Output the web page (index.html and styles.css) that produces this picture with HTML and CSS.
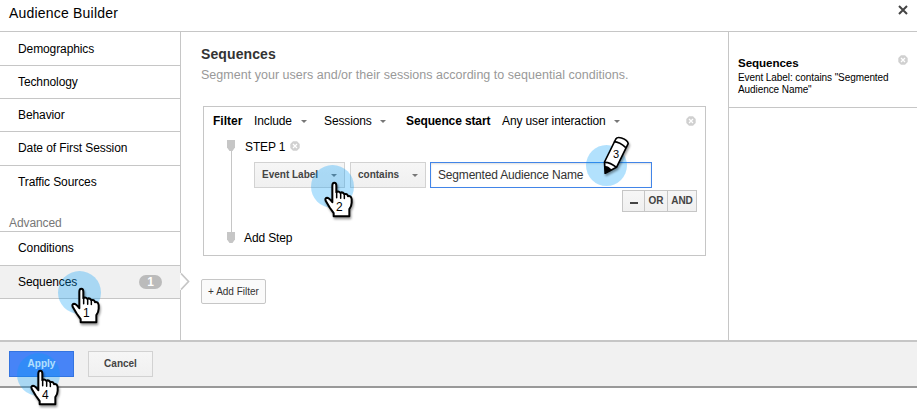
FILE: index.html
```html
<!DOCTYPE html>
<html lang="en">
<head>
<meta charset="utf-8">
<title>Audience Builder</title>
<link rel="stylesheet" href="styles.css">
</head>
<body>
<svg class="defs" width="0" height="0">
  <symbol id="remove" viewBox="0 0 10 10"><path d="M3 .3h4L9.700 3v4L7 9.700H3L.3 7V3z" fill="#d0d0d0"/><path d="M3 3l4 4M7 3L3 7" stroke="#fff" stroke-width="1.300"/></symbol>
  <symbol id="pin" viewBox="0 0 8 11"><path d="M0 0h8v7.500L5.500 11h-3L0 7.500z" fill="#c6c6c6"/></symbol>
  <symbol id="hand" viewBox="0 0 96 116">
    <path d="M28 64V17Q28 8 34 8Q40 8 40 17V36Q46 31 52 38Q58 34 64 42Q72 39 75 48Q84 46 86 57V68Q86 77 79 87V108H32V99L20 82L8 62Q5 54 12 53Q18 53 28 66Z" fill="#fff" stroke="#000" stroke-width="6" stroke-linejoin="round"/>
    <path d="M41 34V53M53 38V54M64 42V55" stroke="#000" stroke-width="4.500" stroke-linecap="round"/>
  </symbol>
</svg>
<div class="dialog">
  <header class="header"><h1>Audience Builder</h1>
    <svg class="close" viewBox="0 0 10 10"><path d="M1 1l8 8M9 1L1 9" stroke="#444" stroke-width="2"/></svg>
  </header>
  <div class="body">
    <nav class="sidebar">
      <a class="item"><span>Demographics</span></a>
      <a class="item"><span>Technology</span></a>
      <a class="item"><span>Behavior</span></a>
      <a class="item tall"><span>Date of First Session</span></a>
      <a class="item last"><span>Traffic Sources</span></a>
      <div class="group"><span>Advanced</span></div>
      <a class="item tall"><span>Conditions</span></a>
      <a class="item active"><span>Sequences</span><b class="count">1</b>
        <svg class="notch" viewBox="0 0 10 17"><path d="M0 0H1L9 8.500L1 17H0z" fill="#fff"/><path d="M1 .5L8.500 8.500L1 16.500" fill="none" stroke="#c6c6c6" stroke-width="1.700"/></svg>
      </a>
    </nav>
    <main class="main">
      <h2>Sequences</h2>
      <p class="intro">Segment your users and/or their sessions according to sequential conditions.</p>
      <section class="filter">
        <div class="filter-head">
          <b class="w-filter">Filter</b><span class="w-include">Include</span><i class="arrow"></i>
          <span class="w-sessions">Sessions</span><i class="arrow"></i>
          <b class="w-start">Sequence start</b><span class="w-any">Any user interaction</span><i class="arrow"></i>
          <svg class="remove"><use href="#remove"/></svg>
        </div>
        <div class="steps">
          <div class="rail"><svg><use href="#pin"/></svg><i></i><svg><use href="#pin"/></svg></div>
          <div class="step">
            <div class="step-title"><span>STEP 1</span><svg class="remove"><use href="#remove"/></svg></div>
            <div class="fields">
              <button class="select event"><span>Event Label</span><i class="arrow"></i></button>
              <button class="select contains"><span>contains</span><i class="arrow"></i></button>
              <div class="input"><span>Segmented Audience Name</span></div>
            </div>
            <div class="logic"><button class="minus"><i></i></button><button>OR</button><button>AND</button></div>
            <div class="add-step"><span>Add Step</span></div>
          </div>
        </div>
      </section>
      <button class="add-filter"><span>+ Add Filter</span></button>
    </main>
    <aside class="summary">
      <div class="card">
        <div class="card-head"><b>Sequences</b><svg class="remove"><use href="#remove"/></svg></div>
        <p>Event Label: contains "Segmented<br>Audience Name"</p>
      </div>
    </aside>
  </div>
  <footer class="footer"><button class="apply"><span>Apply</span></button><button class="cancel"><span>Cancel</span></button></footer>
</div>
<div class="marker m1"><svg><use href="#hand"/></svg><span>1</span></div>
<div class="marker m2"><svg><use href="#hand"/></svg><span>2</span></div>
<div class="marker m3"><svg class="pencil" viewBox="0 0 80 114"><path d="M4 78L38 9Q42 2 55 6Q74 12 75 23L40 94L6 112Z" fill="#fff" stroke="#000" stroke-width="5" stroke-linejoin="round"/><path d="M32 17Q50 18 68 35M4 79Q20 78 40 94" fill="none" stroke="#000" stroke-width="5"/><path d="M5 90Q17 89 25 102L6 112Z"/></svg><span>3</span></div>
<div class="marker m4"><svg><use href="#hand"/></svg><span>4</span></div>
</body>
</html>
```
FILE: styles.css
```css
* { box-sizing: border-box; }
body { margin: 0; width: 917px; height: 417px; overflow: hidden; background: #fff; color: #000; font: 12px/16px "Liberation Sans", Arial, sans-serif; }
h1, h2, p { margin: 0; font-weight: normal; }
button { font: bold 10px/14px "Liberation Sans", Arial, sans-serif; color: #444; padding: 0; margin: 0; border: 1px solid #d2d2d2; background: linear-gradient(#f6f6f6, #f0f0f0); display: flex; align-items: center; justify-content: center; }
span, b { white-space: nowrap; }
.defs { position: absolute; }
.header { height: 32px; border-bottom: 1px solid #c6c6c6; display: flex; align-items: center; justify-content: space-between; padding: 0 9px 5px; }
h1 { font-size: 14px; letter-spacing: .2px; }
.close { width: 10px; height: 10px; margin-bottom: 6px; }
.body { display: flex; height: 308px; }
.sidebar { width: 181px; border-right: 1px solid #c6c6c6; letter-spacing: -.1px; }
.item { display: flex; align-items: center; height: 33px; border-bottom: 1px solid #c6c6c6; padding: 0 18px; }
.item:first-child { height: 34px; }
.item.tall { height: 34px; padding-bottom: 2px; }
.item.last { height: 32px; border: 0; }
.group { height: 34px; display: flex; align-items: flex-end; padding: 0 9px; border-bottom: 1px solid #c6c6c6; color: #777; }
.item.active { background: #f1f1f1; position: relative; justify-content: space-between; }
.count { width: 23px; height: 14px; line-height: 14px; border-radius: 7px; background: #bbb; color: #fff; text-align: center; }
.notch { position: absolute; left: 180px; top: 7px; width: 10px; height: 17px; }
.main { width: 547px; padding: 13px 22px 0 20px; }
h2 { font-size: 14px; line-height: 18px; font-weight: bold; color: #333; letter-spacing: .1px; }
.intro { color: #999; font-size: 12.5px; letter-spacing: .02px; line-height: 18px; margin-top: 3px; white-space: nowrap; }
.filter { margin: 22px 0 0 2px; width: 503px; height: 150px; border: 1px solid #c6c6c6; letter-spacing: -.12px; }
.filter-head { display: flex; align-items: center; height: 27px; padding: 1px 9px 0; }
.arrow { width: 0; height: 0; border: 3px solid transparent; border-top-color: #777; border-bottom: 0; }
.w-filter { width: 41px; letter-spacing: 0; }
.w-include { width: 47px; }
.w-sessions { width: 56px; margin-left: 17px; }
.w-start { width: 96px; margin-left: 20px; }
.w-any { width: 112px; }
.remove { width: 10px; height: 10px; }
.filter-head .remove { margin-left: auto; }
.steps { display: flex; padding: 0 0 0 23px; }
.rail { width: 8px; margin-top: 6px; display: flex; flex-direction: column; align-items: center; }
.rail svg { width: 8px; height: 11px; }
.rail i { width: 1px; height: 81px; background: #c6c6c6; }
.step { padding-left: 9px; flex: 1; }
.step-title { display: flex; align-items: center; gap: 5px; height: 28px; padding: 0 0 2px 1px; }
.step-title .remove { margin-bottom: 2px; }
.fields { display: flex; padding-left: 10px; }
.select { height: 26px; justify-content: space-between; padding: 0 7px; letter-spacing: 0; }
.event { width: 91px; margin-right: 5px; }
.contains { width: 76px; margin-right: 4px; }
.input { width: 222px; height: 26px; border: 1px solid #4285e8; box-shadow: inset 0 1px 2px #ddd; display: flex; align-items: center; padding-left: 7px; color: #333; letter-spacing: -.18px; }
.logic { display: flex; margin: 2px 0 0 378px; }
.logic button { height: 22px; border-color: #c6c6c6; width: 24px; margin-right: -1px; letter-spacing: 0; }
.logic .minus { width: 23px; }
.logic button:last-child { width: 30px; }
.minus i { width: 8px; height: 2px; background: #444; margin-top: 3px; }
.add-step { margin-top: 18px; }
.add-filter { width: 65px; height: 25px; margin-top: 23px; font-weight: normal; color: #333; background: #fafafa; border-color: #c6c6c6; border-radius: 2px; }
.summary { flex: 1; border-left: 1px solid #c6c6c6; }
.card { height: 76px; border-bottom: 1px solid #c6c6c6; padding: 23px 9px 0; font-size: 10px; line-height: 12px; letter-spacing: -.08px; }
.card p { margin-top: 1px; }
.card-head { display: flex; justify-content: space-between; font-size: 11.6px; line-height: 16px; }
.footer { height: 48px; background: #f1f1f1; border-top: 2px solid #c6c6c6; border-bottom: 2px solid #999; padding: 9px; display: flex; gap: 14px; }
.footer button { width: 65px; height: 26px; padding-bottom: 1px; }
.footer .apply { color: #fff; background: #4784f7; border-color: #3474e0; }
.marker { position: absolute; width: 43px; height: 43px; border-radius: 50%; background: rgba(0, 155, 250, .3); }
.marker svg { position: absolute; left: 12px; top: 15px; width: 32px; height: 39px; filter: drop-shadow(1px 2px 1px rgba(0,0,0,.4)); }
.marker span { position: absolute; left: 25px; top: 34px; font-size: 12px; line-height: 16px; }
.m1 { left: 58px; top: 271px; }
.m2 { left: 311px; top: 165px; }
.m3 { left: 586px; top: 145px; width: 41px; height: 41px; }
.m4 { left: 17px; top: 353px; }
.marker .pencil { left: 17px; top: -9px; width: 27px; height: 38px; }
.m3 span { left: 27px; top: 1px; font-size: 11px; }
```
